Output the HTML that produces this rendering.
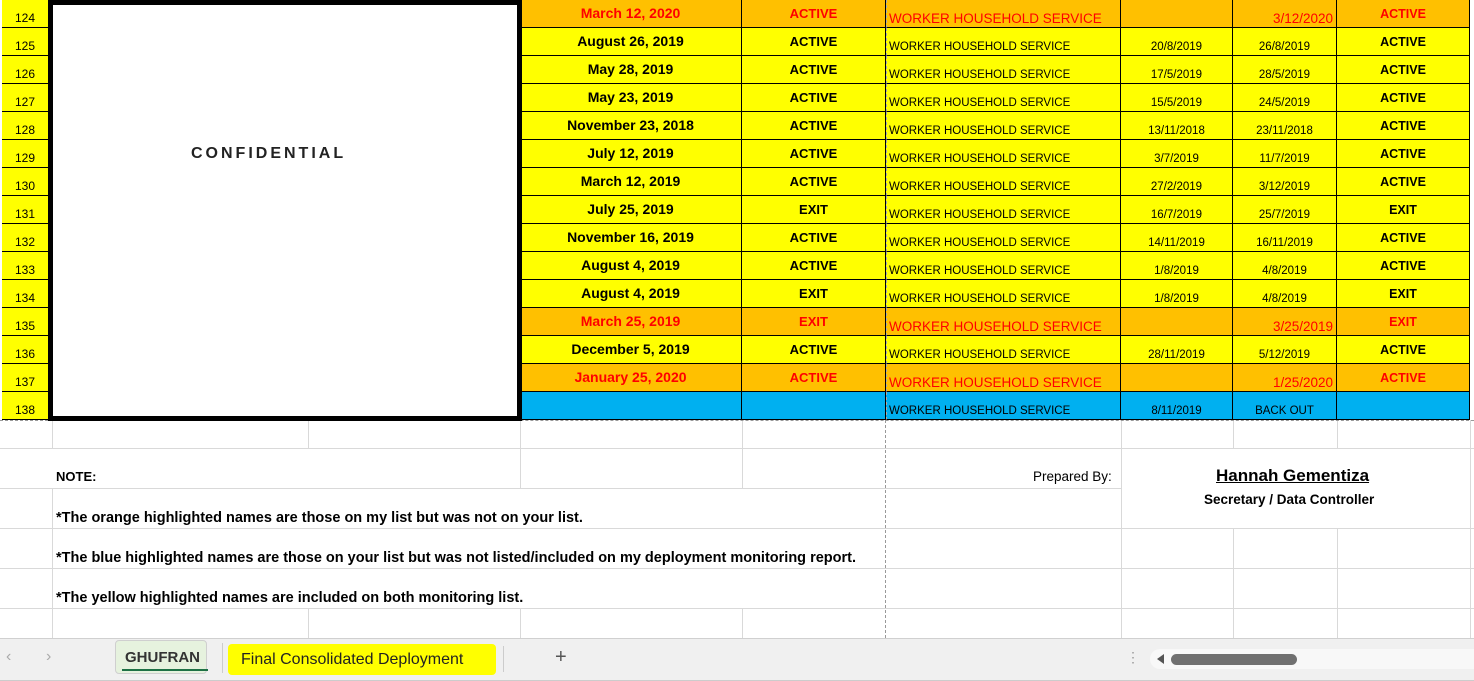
<!DOCTYPE html>
<html><head><meta charset="utf-8"><style>
*{margin:0;padding:0;box-sizing:border-box}
body{width:1474px;height:681px;overflow:hidden;background:#fff;font-family:"Liberation Sans",Arial,sans-serif;position:relative}
.c{position:absolute;height:28px;border-right:1px solid #000;border-bottom:1px solid #000;display:flex;align-items:flex-end;justify-content:center;padding-bottom:3px;white-space:nowrap;overflow:hidden}
.y{background:#ffff00}.o{background:#ffc000;color:#f00}.b{background:#00b0f0}
.n{left:2px;width:47px;font-size:12px;padding-bottom:2px}
.d{left:520px;width:222px;font-size:14px;font-weight:bold;padding-bottom:6px}
.s{left:742px;width:144px;font-size:13px;padding-bottom:6px;font-weight:bold}
.w{left:886px;width:235px;font-size:11.5px;justify-content:flex-start;padding-left:2px;padding-bottom:2px;border-left:1px dashed #aaa}
.o.w{font-size:13.5px;padding-bottom:1px}
.a{left:1121px;width:112px;font-size:11.5px;padding-bottom:2px}
.e{left:1233px;width:104px;font-size:11.5px;padding-bottom:2px}
.o.e{font-size:13.5px;padding-bottom:1px}
.f{left:1337px;width:133px;font-size:12.5px;font-weight:bold;padding-bottom:6px}
.g{position:absolute;background:#d9d9d9}
.t{position:absolute;font-size:14.5px;white-space:nowrap}
</style></head><body>
<div class="g" style="left:0;top:448px;width:1474px;height:1px"></div>
<div class="g" style="left:0;top:488px;width:1121px;height:1px"></div>
<div class="g" style="left:0;top:528px;width:1474px;height:1px"></div>
<div class="g" style="left:0;top:568px;width:1474px;height:1px"></div>
<div class="g" style="left:0;top:608px;width:1474px;height:1px"></div>
<div class="g" style="left:52px;top:420px;width:1px;height:28px"></div>
<div class="g" style="left:52px;top:488px;width:1px;height:150px"></div>
<div class="g" style="left:308px;top:420px;width:1px;height:28px"></div>
<div class="g" style="left:308px;top:608px;width:1px;height:30px"></div>
<div class="g" style="left:520px;top:420px;width:1px;height:68px"></div>
<div class="g" style="left:520px;top:608px;width:1px;height:30px"></div>
<div class="g" style="left:742px;top:420px;width:1px;height:68px"></div>
<div class="g" style="left:742px;top:608px;width:1px;height:30px"></div>
<div style="position:absolute;left:885px;top:420px;height:218px;border-left:1px dashed #999"></div>
<div class="g" style="left:1121px;top:420px;width:1px;height:218px"></div>
<div class="g" style="left:1233px;top:420px;width:1px;height:28px"></div>
<div class="g" style="left:1233px;top:528px;width:1px;height:110px"></div>
<div class="g" style="left:1337px;top:420px;width:1px;height:28px"></div>
<div class="g" style="left:1337px;top:528px;width:1px;height:110px"></div>
<div class="g" style="left:1470px;top:420px;width:1px;height:218px"></div>
<div style="position:absolute;left:0;top:420px;width:1474px;border-top:1px dashed #999"></div>

<div id="rows"></div>
<script>
var R=[
["124","March 12, 2020","ACTIVE","","3/12/2020","ACTIVE","o"],
["125","August 26, 2019","ACTIVE","20/8/2019","26/8/2019","ACTIVE","y"],
["126","May 28, 2019","ACTIVE","17/5/2019","28/5/2019","ACTIVE","y"],
["127","May 23, 2019","ACTIVE","15/5/2019","24/5/2019","ACTIVE","y"],
["128","November 23, 2018","ACTIVE","13/11/2018","23/11/2018","ACTIVE","y"],
["129","July 12, 2019","ACTIVE","3/7/2019","11/7/2019","ACTIVE","y"],
["130","March 12, 2019","ACTIVE","27/2/2019","3/12/2019","ACTIVE","y"],
["131","July 25, 2019","EXIT","16/7/2019","25/7/2019","EXIT","y"],
["132","November 16, 2019","ACTIVE","14/11/2019","16/11/2019","ACTIVE","y"],
["133","August 4, 2019","ACTIVE","1/8/2019","4/8/2019","ACTIVE","y"],
["134","August 4, 2019","EXIT","1/8/2019","4/8/2019","EXIT","y"],
["135","March 25, 2019","EXIT","","3/25/2019","EXIT","o"],
["136","December 5, 2019","ACTIVE","28/11/2019","5/12/2019","ACTIVE","y"],
["137","January 25, 2020","ACTIVE","","1/25/2020","ACTIVE","o"],
["138","","","8/11/2019","BACK OUT","","b"]];
var h="";
R.forEach(function(r,i){var t=i*28,k=r[6];
h+='<div class="c n y" style="top:'+t+'px">'+r[0]+'</div>';
h+='<div class="c d '+k+'" style="top:'+t+'px">'+r[1]+'</div>';
h+='<div class="c s '+k+'" style="top:'+t+'px">'+r[2]+'</div>';
h+='<div class="c w '+k+'" style="top:'+t+'px">WORKER HOUSEHOLD SERVICE</div>';
h+='<div class="c a '+k+'" style="top:'+t+'px">'+r[3]+'</div>';
h+='<div class="c e '+k+'" style="top:'+t+'px;'+(k=="o"?'justify-content:flex-end;padding-right:3px':'')+'">'+r[4]+'</div>';
h+='<div class="c f '+k+'" style="top:'+t+'px">'+r[5]+'</div>';});
document.getElementById("rows").innerHTML=h;
</script>
<div style="position:absolute;left:48px;top:0;width:474px;height:421px;border:5px solid #000;background:#fff"></div>
<div class="t" style="left:191px;top:145px;font-size:16px;font-weight:bold;letter-spacing:3px;color:#222">CONFIDENTIAL</div>

<div class="t" style="left:56px;top:469px;font-weight:bold;font-size:13px">NOTE:</div>
<div class="t" style="left:56px;top:510px;font-weight:bold">*The orange highlighted names are those on my list but was not on your list.</div>
<div class="t" style="left:56px;top:550px;font-weight:bold">*The blue highlighted names are those on your list but was not listed/included on my deployment monitoring report.</div>
<div class="t" style="left:56px;top:590px;font-weight:bold">*The yellow highlighted names are included on both monitoring list.</div>
<div class="t" style="left:1033px;top:469px;font-size:13.5px">Prepared By:</div>
<div class="t" style="left:1216px;top:466px;font-size:17px;font-weight:bold;text-decoration:underline">Hannah Gementiza</div>
<div class="t" style="left:1204px;top:492px;font-weight:bold;font-size:13.5px">Secretary / Data Controller</div>

<div style="position:absolute;left:0;top:638px;width:1474px;height:43px;background:#f0f0f0;border-top:1px solid #d0d0d0;border-bottom:1px solid #ccc"></div>
<div class="t" style="left:6px;top:648px;font-size:16px;color:#aaa">&#8249;</div>
<div class="t" style="left:46px;top:648px;font-size:16px;color:#aaa">&#8250;</div>
<div style="position:absolute;left:115px;top:640px;width:92px;height:34px;background:#e6f2de;border:1px solid #cfcfcf;border-radius:4px"></div>
<div class="t" style="left:125px;top:649px;font-size:15px;font-weight:bold;color:#333">GHUFRAN</div>
<div style="position:absolute;left:122px;top:669px;width:86px;height:2px;background:#1e7145"></div>
<div style="position:absolute;left:222px;top:643px;width:1px;height:30px;background:#ccc"></div>
<div style="position:absolute;left:228px;top:644px;width:268px;height:31px;background:#ffff00;border-radius:4px"></div>
<div class="t" style="left:241px;top:651px;font-size:16px;color:#222">Final Consolidated Deployment</div>
<div style="position:absolute;left:503px;top:646px;width:1px;height:26px;background:#ccc"></div>
<div class="t" style="left:555px;top:646px;font-size:20px;color:#555">+</div>
<div class="t" style="left:1126px;top:649px;font-size:14px;color:#999">&#8942;</div>
<div style="position:absolute;left:1150px;top:649px;width:324px;height:20px;background:#f8f8f8;border-radius:10px 0 0 10px"></div>
<div style="position:absolute;left:1157px;top:654px;width:0;height:0;border-top:5px solid transparent;border-bottom:5px solid transparent;border-right:7px solid #555"></div>
<div style="position:absolute;left:1171px;top:654px;width:126px;height:11px;background:#707070;border-radius:6px"></div>
</body></html>
